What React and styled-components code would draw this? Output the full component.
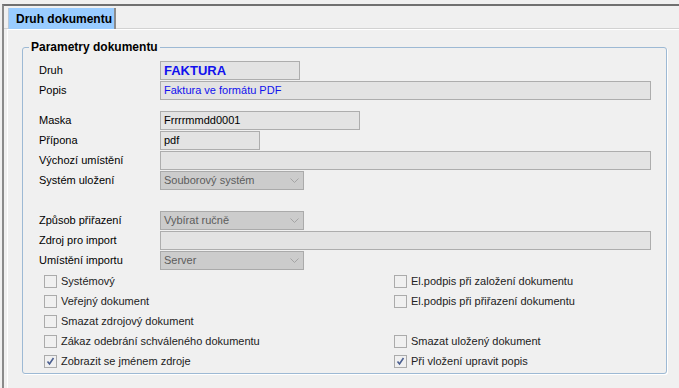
import React from "react";
import styled, { createGlobalStyle } from "styled-components";

const GlobalStyle = createGlobalStyle`
  html, body {
    margin: 0;
    padding: 0;
    background: #f0f0f0;
    font-family: "Liberation Sans", Arial, sans-serif;
    font-size: 11px;
    color: #000;
  }
`;

const Screen = styled.div`
  width: 679px;
  height: 388px;
  padding: 4px 0 0 2px;
  box-sizing: border-box;
  overflow: hidden;
`;

const Window = styled.div`
  height: 100%;
  border-top: 2px solid #707070;
  border-left: 2px solid #8a8a8a;
  box-sizing: border-box;
`;

const TabStrip = styled.div`
  height: 23px;
  display: flex;
  align-items: flex-end;
  padding-left: 4px;
  border-bottom: 1px solid #d2d2d2;
  box-sizing: border-box;
`;

const Tab = styled.div`
  width: 108px;
  height: 21px;
  margin-bottom: -1px;
  background: #99ccff;
  border-left: 1px solid #b9c9d9;
  border-right: 2px solid #8c8c8c;
  box-sizing: border-box;
  font-weight: bold;
  font-size: 12px;
  display: flex;
  align-items: center;
  padding-left: 7px;
`;

const Panel = styled.div`
  margin-left: 3px;
  border-top: 1px solid #ffffff;
  border-left: 1px solid #ffffff;
  padding-top: 10px;
  height: 100%;
  box-sizing: border-box;
`;

const Group = styled.fieldset`
  margin: 0 12px 0 14px;
  padding: 6px 15px 2px 16px;
  border: 1px solid #9db9d4;
  border-radius: 3px;
  box-shadow: 1px 1px 0 #ffffff;
  min-width: 0;
`;

const Legend = styled.legend`
  margin-left: -10px;
  padding: 0 2px;
  font-weight: bold;
  font-size: 12px;
  line-height: 14px;
`;

const Row = styled.div`
  display: flex;
  align-items: center;
  height: 20px;
  margin-top: ${(p) => p.$gap || 0}px;
`;

const Label = styled.div`
  width: 121px;
  flex: none;
  white-space: nowrap;
`;

const Field = styled.div`
  height: 19px;
  box-sizing: border-box;
  width: ${(p) => (p.$width ? `${p.$width}px` : "auto")};
  flex: ${(p) => (p.$width ? "none" : "1")};
  background: #e3e3e3;
  border: 1px solid #adadad;
  padding-left: 3px;
  display: flex;
  align-items: center;
  white-space: nowrap;
  color: ${(p) => (p.$blue ? "#1111ee" : "#000")};
  font-weight: ${(p) => (p.$bold ? "bold" : "normal")};
  font-size: ${(p) => (p.$bold ? "13px" : "11px")};
`;

const Select = styled.div`
  width: 144px;
  height: 19px;
  box-sizing: border-box;
  background: #cccccc;
  border: 1px solid #aaaaaa;
  padding: 0 4px 0 3px;
  display: flex;
  align-items: center;
  justify-content: space-between;
  color: #5c5c5c;
`;

const Chevron = () => (
  <svg width="9" height="5" viewBox="0 0 9 5">
    <path d="M0.5 0.5 L4.5 4.5 L8.5 0.5" fill="none" stroke="#a4a4a4" strokeWidth="1" />
  </svg>
);

const Checks = styled.div`
  display: grid;
  grid-template-columns: 350px 1fr;
  padding-left: 5px;
  margin-top: 1px;
`;

const CheckItem = styled.div`
  height: 20px;
  display: flex;
  align-items: center;
  gap: 4px;
  white-space: nowrap;
  color: #222;
`;

const Box = styled.span`
  width: 13px;
  height: 13px;
  box-sizing: border-box;
  border: 1px solid #ababab;
  background: #f0f0f0;
  display: flex;
  align-items: center;
  justify-content: center;
`;

const Check = ({ checked, label }) => (
  <CheckItem>
    {label && (
      <>
        <Box>
          {checked && (
            <svg width="9" height="9" viewBox="0 0 9 9">
              <path d="M1.5 4.5 L3.5 7 L7.5 1" fill="none" stroke="#4b5f90" strokeWidth="1.6" />
            </svg>
          )}
        </Box>
        <span>{label}</span>
      </>
    )}
  </CheckItem>
);

const checks = [
  ["Systémový", false],
  ["El.podpis při založení dokumentu", false],
  ["Veřejný dokument", false],
  ["El.podpis při přiřazení dokumentu", false],
  ["Smazat zdrojový dokument", false],
  ["", false],
  ["Zákaz odebrání schváleného dokumentu", false],
  ["Smazat uložený dokument", false],
  ["Zobrazit se jménem zdroje", true],
  ["Při vložení upravit popis", true],
];

export default function App() {
  return (
    <Screen>
      <GlobalStyle />
      <Window>
        <TabStrip>
          <Tab>Druh dokumentu</Tab>
        </TabStrip>
        <Panel>
          <Group>
            <Legend>Parametry dokumentu</Legend>
            <Row>
              <Label>Druh</Label>
              <Field $width={140} $blue $bold>FAKTURA</Field>
            </Row>
            <Row>
              <Label>Popis</Label>
              <Field $blue>Faktura ve formátu PDF</Field>
            </Row>
            <Row $gap={10}>
              <Label>Maska</Label>
              <Field $width={200}>Frrrrmmdd0001</Field>
            </Row>
            <Row>
              <Label>Přípona</Label>
              <Field $width={100}>pdf</Field>
            </Row>
            <Row>
              <Label>Výchozí umístění</Label>
              <Field />
            </Row>
            <Row>
              <Label>Systém uložení</Label>
              <Select>
                Souborový systém
                <Chevron />
              </Select>
            </Row>
            <Row $gap={20}>
              <Label>Způsob přiřazení</Label>
              <Select>
                Vybírat ručně
                <Chevron />
              </Select>
            </Row>
            <Row>
              <Label>Zdroj pro import</Label>
              <Field />
            </Row>
            <Row>
              <Label>Umístění importu</Label>
              <Select>
                Server
                <Chevron />
              </Select>
            </Row>
            <Checks>
              {checks.map(([label, checked], i) => (
                <Check key={i} label={label} checked={checked} />
              ))}
            </Checks>
          </Group>
        </Panel>
      </Window>
    </Screen>
  );
}
